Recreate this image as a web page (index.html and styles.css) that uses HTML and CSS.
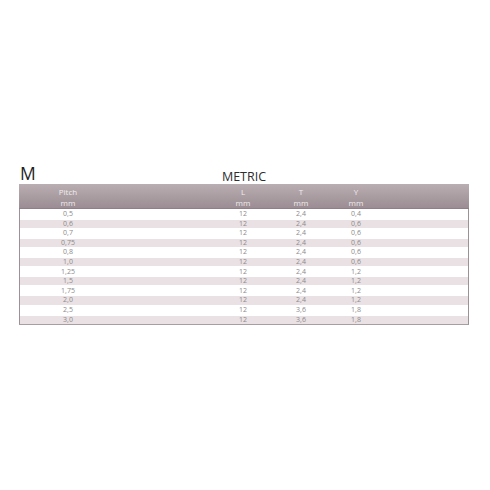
FILE: index.html
```html
<!DOCTYPE html>
<html>
<head>
<meta charset="utf-8">
<link rel="stylesheet" href="styles.css">
</head>
<body>
<div class="page">
  <div class="title-row">
    <div class="big">M</div>
    <div class="metric">METRIC</div>
    <div></div>
  </div>
  <div class="table">
    <div class="head row">
      <div class="c1">Pitch<br>mm</div>
      <div class="c2">L<br>mm</div>
      <div class="c3">T<br>mm</div>
      <div class="c4">Y<br>mm</div>
    </div>
    <div class="body">
      <div class="row"><div class="c1">0,5</div><div class="c2">12</div><div class="c3">2,4</div><div class="c4">0,4</div></div>
      <div class="row alt"><div class="c1">0,6</div><div class="c2">12</div><div class="c3">2,4</div><div class="c4">0,6</div></div>
      <div class="row"><div class="c1">0,7</div><div class="c2">12</div><div class="c3">2,4</div><div class="c4">0,6</div></div>
      <div class="row alt"><div class="c1">0,75</div><div class="c2">12</div><div class="c3">2,4</div><div class="c4">0,6</div></div>
      <div class="row"><div class="c1">0,8</div><div class="c2">12</div><div class="c3">2,4</div><div class="c4">0,6</div></div>
      <div class="row alt"><div class="c1">1,0</div><div class="c2">12</div><div class="c3">2,4</div><div class="c4">0,6</div></div>
      <div class="row"><div class="c1">1,25</div><div class="c2">12</div><div class="c3">2,4</div><div class="c4">1,2</div></div>
      <div class="row alt"><div class="c1">1,5</div><div class="c2">12</div><div class="c3">2,4</div><div class="c4">1,2</div></div>
      <div class="row"><div class="c1">1,75</div><div class="c2">12</div><div class="c3">2,4</div><div class="c4">1,2</div></div>
      <div class="row alt"><div class="c1">2,0</div><div class="c2">12</div><div class="c3">2,4</div><div class="c4">1,2</div></div>
      <div class="row"><div class="c1">2,5</div><div class="c2">12</div><div class="c3">3,6</div><div class="c4">1,8</div></div>
      <div class="row alt"><div class="c1">3,0</div><div class="c2">12</div><div class="c3">3,6</div><div class="c4">1,8</div></div>
    </div>
  </div>
</div>
</body>
</html>
```

FILE: styles.css
```css
html, body {
  margin: 0;
  padding: 0;
  background: #ffffff;
}
body {
  font-family: "Open Sans", "DejaVu Sans", sans-serif;
}
.page {
  padding-top: 163px;
  padding-left: 19px;
  width: 450px;
}
.title-row {
  display: grid;
  grid-template-columns: 1fr auto 1fr;
  align-items: baseline;
  height: 20px;
  line-height: 20px;
}
.big {
  font-size: 17.5px;
  font-weight: 500;
  color: #1e1e1e;
  padding-left: 1px;
}
.metric {
  font-size: 12.5px;
  color: #2e2e2e;
  position: relative;
  top: 1px;
}
.table {
  margin-top: 1px;
  box-sizing: border-box;
  width: 450px;
  border-left: 1px solid #9c9196;
  border-right: 1px solid #9c9196;
  border-bottom: 1px solid #a89ea2;
}
.row {
  display: grid;
  grid-template-columns: 96px 107px 40px 18px 40px 15px 40px 1fr;
  text-align: center;
  font-size: 7px;
  color: #8d8a8b;
  height: 8.3px;
  line-height: 8.3px;
}
.row.alt {
  background: #e9e1e3;
}
.c1 { grid-column: 1; }
.c2 { grid-column: 3; }
.c3 { grid-column: 5; }
.c4 { grid-column: 7; }
.head.row {
  height: 25px;
  box-sizing: border-box;
  padding-top: 1.5px;
  line-height: 11px;
  font-size: 8px;
  color: #f1ecee;
  background: linear-gradient(#b9aeb2, #9b8d93);
  border-bottom: 1px solid #8e8086;
  margin-right: -1px;
  margin-left: -1px;
  padding-left: 1px;
}
.body {
  display: flex;
  flex-direction: column;
  gap: 1.3px;
  padding-top: 1px;
}
```
